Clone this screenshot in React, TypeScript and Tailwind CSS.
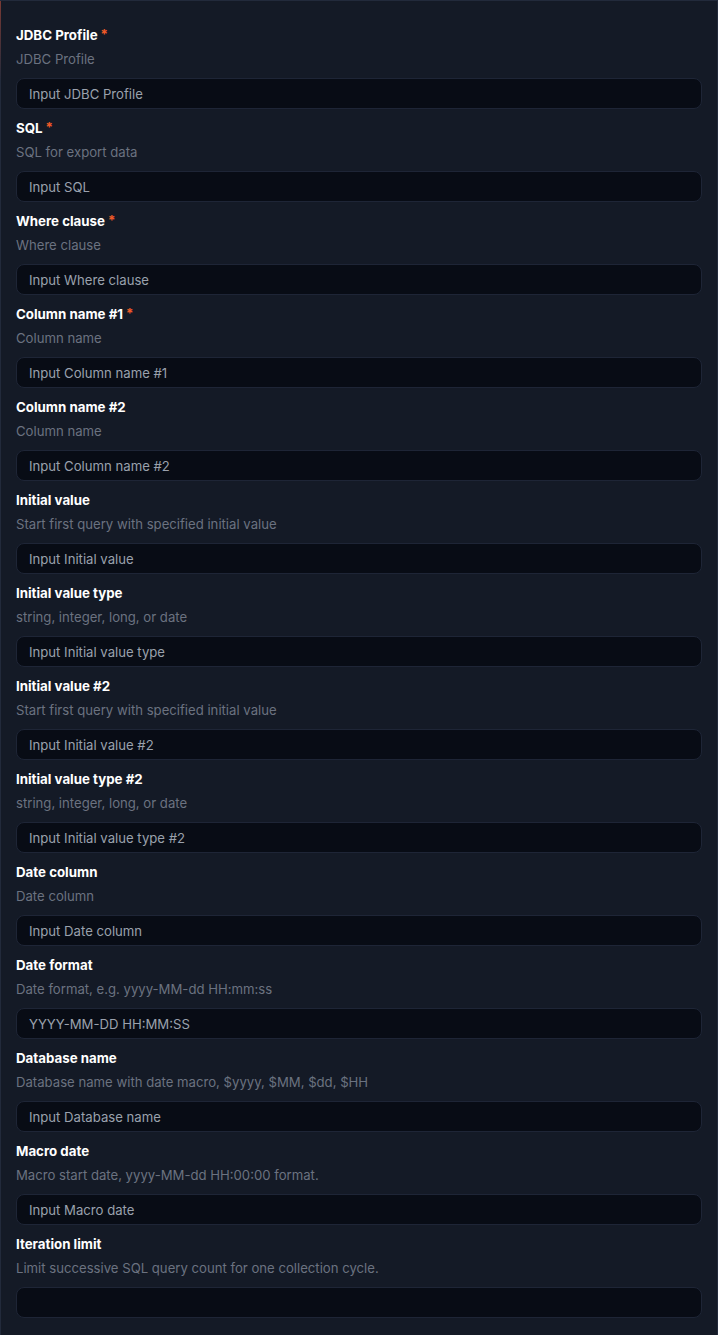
import React from 'react'

type Field = {
  label: string
  desc: string
  placeholder: string
  required?: boolean
}

const fields: Field[] = [
  { label: 'JDBC Profile', desc: 'JDBC Profile', placeholder: 'Input JDBC Profile', required: true },
  { label: 'SQL', desc: 'SQL for export data', placeholder: 'Input SQL', required: true },
  { label: 'Where clause', desc: 'Where clause', placeholder: 'Input Where clause', required: true },
  { label: 'Column name #1', desc: 'Column name', placeholder: 'Input Column name #1', required: true },
  { label: 'Column name #2', desc: 'Column name', placeholder: 'Input Column name #2' },
  { label: 'Initial value', desc: 'Start first query with specified initial value', placeholder: 'Input Initial value' },
  { label: 'Initial value type', desc: 'string, integer, long, or date', placeholder: 'Input Initial value type' },
  { label: 'Initial value #2', desc: 'Start first query with specified initial value', placeholder: 'Input Initial value #2' },
  { label: 'Initial value type #2', desc: 'string, integer, long, or date', placeholder: 'Input Initial value type #2' },
  { label: 'Date column', desc: 'Date column', placeholder: 'Input Date column' },
  { label: 'Date format', desc: 'Date format, e.g. yyyy-MM-dd HH:mm:ss', placeholder: 'YYYY-MM-DD HH:MM:SS' },
  { label: 'Database name', desc: 'Database name with date macro, $yyyy, $MM, $dd, $HH', placeholder: 'Input Database name' },
  { label: 'Macro date', desc: 'Macro start date, yyyy-MM-dd HH:00:00 format.', placeholder: 'Input Macro date' },
  { label: 'Iteration limit', desc: 'Limit successive SQL query count for one collection cycle.', placeholder: '' },
]

export default function App() {
  return (
    <div className="relative min-h-[1335px] w-[718px] border border-b-0 border-[#222a3b] bg-[#141a26] px-[15px] pt-6 font-['Inter','Noto_Sans',sans-serif] text-[13.15px]">
      {/* reddish accent at the top of the left edge */}
      <div className="pointer-events-none absolute -left-px top-0 h-[80px] w-px bg-gradient-to-b from-[#7a3a34] to-transparent" />
      {fields.map(f => (
        <div key={f.label} className="pb-[9px]">
          <div className="flex h-5 items-center text-[13.3px] font-bold leading-5 text-white">
            {f.label}
            {f.required && <span className="ml-[3px] -translate-y-px text-[#f05a28]">*</span>}
          </div>
          <div className="mt-1 leading-5 text-[#6b7280]">{f.desc}</div>
          <input
            type="text"
            placeholder={f.placeholder}
            className="mt-[9px] block h-[31px] w-full rounded-lg border border-[#1e2536] bg-[#080c15] px-3 text-[13.15px] text-white placeholder:text-[#9aa1ad] focus:outline-none"
          />
        </div>
      ))}
    </div>
  )
}
